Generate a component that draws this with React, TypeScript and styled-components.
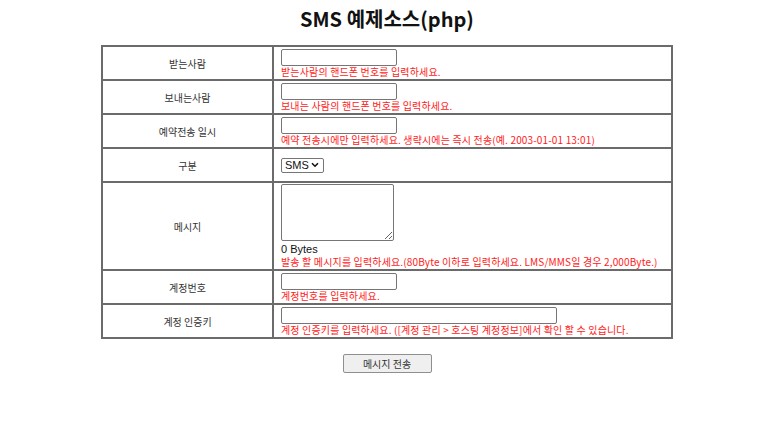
import styled, { createGlobalStyle } from 'styled-components';

const GlobalStyle = createGlobalStyle`
  html, body {
    margin: 0;
    padding: 0;
    background: #ffffff;
  }
  body {
    font-family: 'Liberation Sans', 'Noto Sans CJK KR', sans-serif;
    font-size: 10px;
    color: #222;
  }
`;

const Page = styled.div`
  width: 768px;
  box-sizing: border-box;
  padding: 7px 0 0 6px;
  display: flex;
  flex-direction: column;
  align-items: center;
`;

const Title = styled.h2`
  margin: 0 0 14px;
  font-size: 20px;
  font-weight: 700;
  line-height: 24px;
  color: #111;
  font-family: 'Noto Sans CJK KR', 'Liberation Sans', sans-serif;
`;

const FormTable = styled.table`
  width: 572px;
  border-collapse: collapse;
  border: 2px solid #6b6b6b;
`;

const Row = styled.tr<{ $tall?: boolean }>`
  height: ${(p) => (p.$tall ? '85px' : '34px')};
`;

const Label = styled.td`
  width: 167px;
  border: 2px solid #6b6b6b;
  text-align: center;
  vertical-align: middle;
  font-size: 10px;
  color: #333;
  font-family: 'Noto Sans CJK KR', sans-serif;
`;

const Field = styled.td`
  border: 2px solid #6b6b6b;
  padding: 1px 7px;
  vertical-align: middle;
`;

const TextInput = styled.input<{ $wide?: boolean }>`
  display: block;
  box-sizing: border-box;
  width: ${(p) => (p.$wide ? '276px' : '116px')};
  height: 17px;
  margin: 0;
  border: 1px solid #767676;
  border-radius: 2px;
  padding: 0 2px;
  font-size: 11px;
`;

const Hint = styled.div`
  color: #ff1a1a;
  font-size: 10px;
  line-height: 12px;
  font-family: 'Noto Sans CJK KR', sans-serif;
  letter-spacing: 0.15px;
  white-space: nowrap;
`;

const SelectWrap = styled.div`
  position: relative;
  width: 43px;
  height: 15px;
`;

const Select = styled.select`
  display: block;
  box-sizing: border-box;
  width: 43px;
  height: 15px;
  margin: 0;
  padding: 0 0 0 3px;
  appearance: none;
  font-size: 11px;
  line-height: 13px;
  font-family: 'Liberation Sans', sans-serif;
  border: 1px solid #767676;
  border-radius: 2px;
  background: #fff;
  color: #111;
`;

const Chevron = styled.svg`
  position: absolute;
  right: 5px;
  top: 4px;
  width: 8px;
  height: 6px;
  pointer-events: none;
`;

const MessageBox = styled.textarea`
  display: block;
  box-sizing: border-box;
  width: 113px;
  height: 57px;
  margin: 0;
  border: 1px solid #767676;
  border-radius: 2px;
`;

const ByteCount = styled.div`
  margin-top: 2px;
  font-size: 11px;
  line-height: 13px;
  color: #111;
`;

const SubmitButton = styled.button`
  margin-top: 15px;
  width: 89px;
  height: 19px;
  padding: 0;
  border: 1px solid #8f8f8f;
  border-radius: 2px;
  background: #efefef;
  font-size: 10px;
  color: #333;
  font-family: 'Noto Sans CJK KR', sans-serif;
`;

interface InputRowProps {
  label: string;
  hint: string;
  wide?: boolean;
}

function InputRow({ label, hint, wide }: InputRowProps) {
  return (
    <Row>
      <Label>{label}</Label>
      <Field>
        <TextInput type="text" $wide={wide} />
        <Hint>{hint}</Hint>
      </Field>
    </Row>
  );
}

export default function App() {
  return (
    <>
      <GlobalStyle />
      <Page>
        <Title>SMS 예제소스(php)</Title>
        <FormTable>
          <tbody>
            <InputRow label="받는사람" hint="받는사람의 핸드폰 번호를 입력하세요." />
            <InputRow label="보내는사람" hint="보내는 사람의 핸드폰 번호를 입력하세요." />
            <InputRow
              label="예약전송 일시"
              hint="예약 전송시에만 입력하세요. 생략시에는 즉시 전송(예. 2003-01-01 13:01)"
            />
            <Row>
              <Label>구분</Label>
              <Field>
                <SelectWrap>
                  <Select defaultValue="SMS">
                    <option value="SMS">SMS</option>
                    <option value="LMS">LMS</option>
                    <option value="MMS">MMS</option>
                  </Select>
                  <Chevron viewBox="0 0 8 6">
                    <path d="M1 1.2 L4 4.2 L7 1.2" fill="none" stroke="#111" strokeWidth="1.6" />
                  </Chevron>
                </SelectWrap>
              </Field>
            </Row>
            <Row $tall>
              <Label>메시지</Label>
              <Field>
                <MessageBox />
                <ByteCount>0 Bytes</ByteCount>
                <Hint>
                  발송 할 메시지를 입력하세요.(80Byte 이하로 입력하세요. LMS/MMS일 경우 2,000Byte.)
                </Hint>
              </Field>
            </Row>
            <InputRow label="계정번호" hint="계정번호를 입력하세요." />
            <InputRow
              label="계정 인증키"
              wide
              hint="계정 인증키를 입력하세요. ([계정 관리 > 호스팅 계정정보]에서 확인 할 수 있습니다."
            />
          </tbody>
        </FormTable>
        <SubmitButton type="button">메시지 전송</SubmitButton>
      </Page>
    </>
  );
}
